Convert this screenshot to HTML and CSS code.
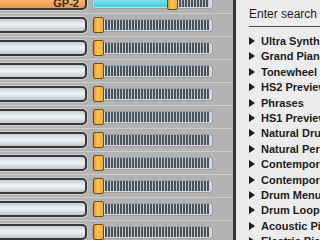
FILE: index.html
```html
<!DOCTYPE html>
<html lang="en">
<head>
    <meta charset="UTF-8">
    <meta name="viewport" content="width=device-width, initial-scale=1.0">
    <link rel="stylesheet" href="styles.css">
    <title>Mixer</title>
</head>
<body>
    <div class="app">
        <main class="tracks">
            <div class="row">
                <div class="name name-active">GP-2</div>
                <div class="slider">
                    <div class="fill"></div>
                    <div class="knob"></div>
                    <div class="ticks"></div>
                </div>
            </div>
            <div class="row"><div class="name"></div><div class="slider"><div class="knob"></div><div class="ticks"></div></div></div>
            <div class="row"><div class="name"></div><div class="slider"><div class="knob"></div><div class="ticks"></div></div></div>
            <div class="row"><div class="name"></div><div class="slider"><div class="knob"></div><div class="ticks"></div></div></div>
            <div class="row"><div class="name"></div><div class="slider"><div class="knob"></div><div class="ticks"></div></div></div>
            <div class="row"><div class="name"></div><div class="slider"><div class="knob"></div><div class="ticks"></div></div></div>
            <div class="row"><div class="name"></div><div class="slider"><div class="knob"></div><div class="ticks"></div></div></div>
            <div class="row"><div class="name"></div><div class="slider"><div class="knob"></div><div class="ticks"></div></div></div>
            <div class="row"><div class="name"></div><div class="slider"><div class="knob"></div><div class="ticks"></div></div></div>
            <div class="row"><div class="name"></div><div class="slider"><div class="knob"></div><div class="ticks"></div></div></div>
            <div class="row"><div class="name"></div><div class="slider"><div class="knob"></div><div class="ticks"></div></div></div>
            <div class="row"><div class="name"></div><div class="slider"><div class="knob"></div><div class="ticks"></div></div></div>
        </main>
        <div class="divider"></div>
        <aside class="browser">
            <div class="search">Enter search</div>
            <ul class="list">
                <li>Ultra Synth</li>
                <li>Grand Piano</li>
                <li>Tonewheel Organ</li>
                <li>HS2 Preview</li>
                <li>Phrases</li>
                <li>HS1 Preview</li>
                <li>Natural Drums</li>
                <li>Natural Percussion</li>
                <li>Contemporary</li>
                <li>Contemporary</li>
                <li>Drum Menu</li>
                <li>Drum Loops</li>
                <li>Acoustic Piano</li>
                <li>Electric Piano</li>
            </ul>
        </aside>
    </div>
</body>
</html>
```

FILE: styles.css
```css
* { box-sizing: border-box; }
body { margin: 0; font-family: "Liberation Sans", Arial, sans-serif; }

.app {
    display: flex;
    width: 320px;
    height: 240px;
    overflow: hidden;
}

/* mixer rows */
.tracks {
    width: 233px;
    flex-shrink: 0;
    background: #b3b3b3;
    margin-top: -9px;
}
.row {
    display: flex;
    align-items: center;
    height: 23px;
    border-bottom: 1px solid #cdcdcd;
}
.name {
    width: 97px;
    height: 16px;
    margin-left: -10px;
    margin-right: 5px;
    border: 2px solid #383838;
    border-radius: 5px;
    background: linear-gradient(#c8ced4, #e6ebef 35%, #f0f3f6 50%, #dce1e5 70%, #c0c6cc);
    box-shadow: 0 0 0 1px #cfcfcf;
}
.name-active {
    display: flex;
    justify-content: flex-end;
    align-items: flex-end;
    padding-right: 6px;
    padding-bottom: 0;
    font-size: 11px;
    line-height: 9px;
    font-weight: bold;
    color: #3a2a1a;
    background: linear-gradient(#f9c890, #f4a860 60%, #ec9848);
}

.slider {
    display: flex;
    align-items: center;
    width: 121px;
    height: 13px;
    padding: 0 3px 0 0;
    border: 1px solid #9ca2a8;
    border-radius: 3px;
    background: #d4d8dc;
}
.knob {
    width: 11px;
    height: 16px;
    flex-shrink: 0;
    border: 1px solid #6e4a14;
    border-radius: 2px;
    background: linear-gradient(90deg, #e8962c, #f8c25a 40%, #f0a83c);
}
.fill {
    width: 74px;
    height: 9px;
    margin-left: 1px;
    margin-right: -1px;
    background: linear-gradient(#8ae8ee, #3ccfda);
}
.ticks {
    flex: 1;
    height: 10px;
    margin-left: 1px;
    background: repeating-linear-gradient(90deg, #4c545c 0 2px, #bcc3c9 2px 3px);
}

.divider {
    width: 3px;
    flex-shrink: 0;
    background: #353535;
}

/* sound browser */
.browser {
    flex: 1;
    background: #ececec;
    padding: 7px 0 0 13px;
    color: #1c1c1c;
    white-space: nowrap;
}
.search {
    font-size: 12px;
    line-height: 14px;
    padding-bottom: 5px;
    border-bottom: 1px solid #4a4a4a;
}
.list {
    list-style: none;
    margin: 7px 0 0;
    padding: 0;
}
.list li {
    font-size: 11px;
    font-weight: bold;
    line-height: 15.4px;
}
.list li::before {
    content: "";
    display: inline-block;
    width: 0;
    height: 0;
    margin-right: 6px;
    border-top: 4px solid transparent;
    border-bottom: 4px solid transparent;
    border-left: 6px solid #1c1c1c;
}
```
